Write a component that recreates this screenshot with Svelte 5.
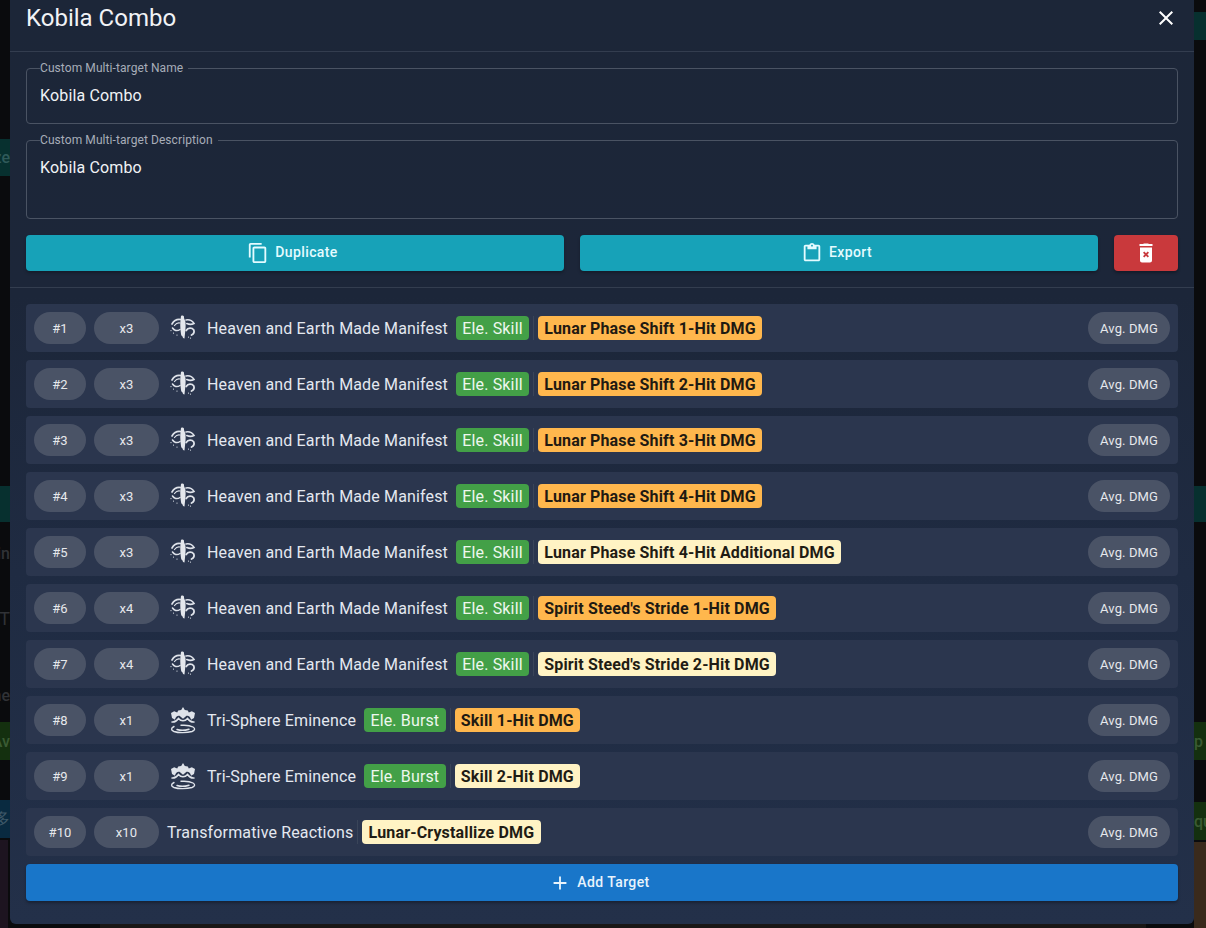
<script>
  const rows = [
    ['#1','x3','a','Heaven and Earth Made Manifest','Ele. Skill','Lunar Phase Shift 1-Hit DMG','o'],
    ['#2','x3','a','Heaven and Earth Made Manifest','Ele. Skill','Lunar Phase Shift 2-Hit DMG','o'],
    ['#3','x3','a','Heaven and Earth Made Manifest','Ele. Skill','Lunar Phase Shift 3-Hit DMG','o'],
    ['#4','x3','a','Heaven and Earth Made Manifest','Ele. Skill','Lunar Phase Shift 4-Hit DMG','o'],
    ['#5','x3','a','Heaven and Earth Made Manifest','Ele. Skill','Lunar Phase Shift 4-Hit Additional DMG','y'],
    ['#6','x4','a','Heaven and Earth Made Manifest','Ele. Skill',"Spirit Steed's Stride 1-Hit DMG",'o'],
    ['#7','x4','a','Heaven and Earth Made Manifest','Ele. Skill',"Spirit Steed's Stride 2-Hit DMG",'y'],
    ['#8','x1','b','Tri-Sphere Eminence','Ele. Burst','Skill 1-Hit DMG','o'],
    ['#9','x1','b','Tri-Sphere Eminence','Ele. Burst','Skill 2-Hit DMG','y'],
    ['#10','x10','','Transformative Reactions','','Lunar-Crystallize DMG','y'],
  ];
</script>

<div class="page">
  <div class="bg" aria-hidden="true">
    <span class="bit teal" style="top:139px;height:37px">ze</span>
    <span class="bit teal" style="top:486px;height:36px"></span>
    <span class="bit plain" style="top:544px">in</span>
    <span class="bit plain big" style="top:608px">T</span>
    <span class="bit plain" style="top:686px">ne</span>
    <span class="bit green" style="top:722px;height:38px">Av</span>
    <span class="bit blue" style="top:800px;height:38px">多</span>
    <span class="rbit teal" style="top:12px;height:28px"></span>
    <span class="rbit teal" style="top:486px;height:36px"></span>
    <span class="rbit green" style="top:722px;height:38px">p</span>
    <span class="rbit green" style="top:802px;height:38px">qu</span>
    <span class="lbrown"></span>
    <span class="rbrown"></span>
    <span class="bottom"></span>
  </div>

  <main class="modal">
    <header class="head">
      <h2>Kobila Combo</h2>
      <svg class="close" viewBox="0 0 24 24" width="24" height="24"><path fill="#fff" d="M19 6.41 17.59 5 12 10.59 6.41 5 5 6.41 10.59 12 5 17.59 6.41 19 12 13.41 17.59 19 19 17.59 13.41 12z"/></svg>
    </header>
    <hr />
    <section class="form">
      <fieldset class="field one">
        <legend>Custom Multi-target Name</legend>
        <div class="val">Kobila Combo</div>
      </fieldset>
      <fieldset class="field two">
        <legend>Custom Multi-target Description</legend>
        <div class="val">Kobila Combo</div>
      </fieldset>
      <div class="actions">
        <button class="btn teal-btn dup">
          <svg viewBox="0 0 24 24" width="22" height="22"><path fill="currentColor" d="M16 1H4c-1.100 0-2 .9-2 2v14h2V3h12V1zm3 4H8c-1.100 0-2 .9-2 2v14c0 1.100.9 2 2 2h11c1.100 0 2-.9 2-2V7c0-1.100-.9-2-2-2zm0 16H8V7h11v14z"/></svg>
          <span>Duplicate</span>
        </button>
        <button class="btn teal-btn exp">
          <svg viewBox="0 0 24 24" width="22" height="22"><path fill="currentColor" d="M19 3h-4.180C14.400 1.840 13.300 1 12 1s-2.400.84-2.820 2H5c-1.100 0-2 .9-2 2v14c0 1.100.9 2 2 2h14c1.100 0 2-.9 2-2V5c0-1.100-.9-2-2-2zm-7 0c.55 0 1 .45 1 1s-.45 1-1 1-1-.45-1-1 .45-1 1-1zm7 16H5V5h2v3h10V5h2v14z"/></svg>
          <span>Export</span>
        </button>
        <button class="btn del" aria-label="Delete">
          <svg viewBox="0 0 24 24" width="24" height="24"><path fill="currentColor" fill-rule="evenodd" d="M15 3 14 2.500H10L9 3H5.500V5H18.500V3ZM6 6.500V19.500C6 20.600 6.900 21.500 8 21.500H16C17.100 21.500 18 20.600 18 19.500V6.500ZM10.300 10.500 12 12.200 13.700 10.500 15 11.800 13.300 13.500 15 15.200 13.700 16.500 12 14.800 10.300 16.500 9 15.200 10.700 13.500 9 11.800Z"/></svg>
        </button>
      </div>
    </section>
    <hr />
    <section class="list">
      {#each rows as r}
        <div class="row">
          <span class="chip num">{r[0]}</span>
          <span class="chip mult">{r[1]}</span>
          {#if r[2] === 'a'}
            <svg class="ico" viewBox="0 0 30 30" width="30" height="30" fill="none" stroke="#dfe3ea" stroke-linecap="round">
              <path fill="#e4e7ec" stroke="none" d="M13 3C15 2 16.500 3 16 5L17.500 9C18 14 17 20 16.500 25.500L15 25C14.500 22 13.500 24 13 21C12 15 12 9 13 3Z"/>
              <path d="M4 11C6 7.500 9 6 12.500 6.500" stroke-width="1.700"/>
              <path d="M6.500 12.500C8 10.500 10 9.500 12 10" stroke-width="1.200"/>
              <path d="M18 7C20.500 6.500 24 7.500 26 10.500 24 11.500 21 11.500 18.800 10.500" stroke-width="1.600"/>
              <path d="M4.500 15C6 17.500 9 18.500 12 16.500" stroke-width="1.500"/>
              <path d="M18.200 17.500C20 14.500 24 14.500 25.800 17 26.500 19 25.500 21 23.500 22" stroke-width="1.800"/>
              <path d="M3 17.500v.1M5.500 20v.1M9 22v.1M20.500 24v.1M22.500 25v.1" stroke-width="1.200"/>
            </svg>
          {:else if r[2] === 'b'}
            <svg class="ico" viewBox="0 0 30 30" width="30" height="30" fill="none" stroke="#dfe3ea" stroke-linecap="round">
              <path fill="#dfe3ea" stroke="none" d="M15 2l1.800 3 3 .5 1 2 3-1.200 3.200 1.700-1 5-3 1.800c-.5-3-2.500-4.500-4.500-4l-3.500 3-3.500-3c-2-.5-4 1-4.500 4L4 13 3 8l3.200-1.700 3 1.200 1-2 3-.5z"/>
              <path d="M4 17c3 .5 5-1.500 6.500-3.500 2.500 3 6.500 3 9 0 1.500 2 3.500 4 6.500 3.500" stroke-width="1.500"/>
              <path d="M6 21.500C3 23 2.500 25 6 26.500c4 1.500 13 1.500 18 0 3-1 3.500-3 1-4.500-3-1.700-8-2-12-1.700" stroke-width="1.400"/>
              <path d="M9 24.500c3 1 8 1 12-.3" stroke-width="1.500"/>
            </svg>
          {/if}
          <span class="name" class:nogap={!r[2]}>{r[3]}</span>
          {#if r[4]}<span class="tag green-tag">{r[4]}</span>{/if}<i class="sep"></i>
          <span class="tag {r[6] === 'o' ? 'orange' : 'cream'}">{r[5]}</span>
          <span class="chip avg">Avg. DMG</span>
        </div>
      {/each}
      <button class="btn add">
        <svg viewBox="0 0 24 24" width="22" height="22"><path fill="currentColor" d="M19 13h-6v6h-2v-6H5v-2h6V5h2v6h6v2z"/></svg>
        <span>Add Target</span>
      </button>
    </section>
  </main>
</div>

<style>
  :global(body) {
    margin: 0;
    background: #0a0b0d;
    font-family: Roboto, "Liberation Sans", sans-serif;
  }
  .page {
    position: relative;
    width: 1206px;
    height: 928px;
    overflow: hidden;
    padding: 0 12px;
    box-sizing: border-box;
  }
  .bg { position: absolute; inset: 0; }
  .bit, .rbit {
    position: absolute;
    font-size: 16px;
    font-weight: 500;
    display: flex;
    align-items: center;
    overflow: hidden;
  }
  .bit { left: 0; width: 10px; justify-content: flex-end; white-space: nowrap; }
  .rbit { right: 0; width: 12px; white-space: nowrap; }
  .teal { background: #07302f; color: #2f5a5a; }
  .plain { color: #303236; }
  .big { font-size: 18px; font-weight: 400; }
  .green { background: #14300f; color: #3a5b33; }
  .blue { background: #092a40; color: #3e5868; }
  .lbrown { position: absolute; left: 0; top: 840px; width: 8px; height: 88px; background: #1d1420; }
  .rbrown { position: absolute; right: 0; top: 842px; width: 12px; height: 86px; background: #3a2a1c; }
  .bottom { position: absolute; left: 100px; right: 60px; top: 924px; height: 4px; background: #1a1716; }

  .modal {
    position: relative;
    width: 1184px;
    margin-left: -2px;
    height: 924px;
    box-sizing: border-box;
    background: linear-gradient(180deg, #1c2638 0%, #1c2639 32%, #1f2b42 62%, #233049 100%);
    border-radius: 0 0 6px 6px;
    color: #fff;
  }
  hr { margin: 0; border: 0; height: 1px; background: #333d4f; }
  .head {
    height: 51px;
    padding: 0 16px;
    box-sizing: border-box;
    display: flex;
    align-items: flex-start;
    justify-content: space-between;
  }
  h2 {
    margin: 0;
    font-size: 24px;
    line-height: 36px;
    font-weight: 400;
    color: #f1f3f6;
  }
  .close { margin: 6px 0 0 0; }
  .form {
    padding: 10px 16px 16px;
    display: flex;
    flex-direction: column;
    gap: 10px;
  }
  .field {
    margin: 0;
    padding: 0 13px;
    border: 1px solid #4a5363;
    border-radius: 4px;
    min-width: 0;
  }
  .field legend {
    padding: 0 5px 0 0;
    font-size: 12px;
    line-height: 12px;
    letter-spacing: .08px;
    color: #a7adb8;
  }
  .field.one { height: 60px; }
  .field.two { height: 83px; }
  .val { font-size: 16px; line-height: 24px; letter-spacing: .15px; color: #f0f2f5; margin-top: 10px; }
  .actions { display: flex; gap: 16px; margin-top: 6px; }
  .btn {
    border: 0;
    border-radius: 4px;
    height: 36px;
    font-family: inherit;
    font-size: 14px;
    font-weight: 500;
    letter-spacing: .4px;
    color: #fff;
    display: flex;
    align-items: center;
    justify-content: center;
    gap: 6px;
    padding: 0 5px 0 0;
  }
  .btn span { margin-bottom: 2px; }
  .teal-btn { background: #17a2b8; color: #e4fbff; box-shadow: 0 2px 3px rgba(0,0,0,.25); }
  .dup { width: 538px; }
  .exp { width: 518px; }
  .del { width: 64px; padding: 0; background: #c9393c; box-shadow: 0 2px 3px rgba(0,0,0,.3); }
  .list {
    padding: 16px 16px 0;
    display: flex;
    flex-direction: column;
    gap: 8px;
  }
  .row {
    height: 48px;
    background: #2b364e;
    border-radius: 4px;
    padding: 0 8px;
    box-sizing: border-box;
    display: flex;
    align-items: center;
  }
  .chip {
    height: 32px;
    border-radius: 16px;
    background: #4a5366;
    color: #e6e8ec;
    font-size: 13px;
    letter-spacing: .1px;
    display: flex;
    align-items: center;
    justify-content: center;
    box-sizing: border-box;
  }
  .num { width: 52px; }
  .mult { width: 65px; margin-left: 8px; }
  .avg { width: 82px; margin-left: auto; }
  .ico { margin-left: 9px; flex: none; }
  .name {
    font-size: 16px;
    letter-spacing: .15px;
    color: #e4e8f0;
    margin-left: 9px;
    white-space: nowrap;
  }
  .name.nogap { margin-left: 8px; }
  .tag {
    height: 24px;
    box-sizing: border-box;
    line-height: 24px;
    padding: 1px 6.3px 0;
    border-radius: 4px;
    font-size: 16px;
    letter-spacing: .15px;
    white-space: nowrap;
  }
  .green-tag { background: #43a047; color: #eef7ee; margin-left: 8px; }
  .orange { background: #ffb74d; color: #1f1a12; font-weight: 700; }
  .cream { background: #fff3c4; color: #1f1c14; font-weight: 700; }
  .sep { width: 1px; height: 24px; background: #3a4559; margin: 0 4px; }
  .add {
    height: 37px;
    background: #1976c9;
    box-shadow: 0 2px 3px rgba(0,0,0,.3);
    color: #e8f3fc;
  }
</style>
